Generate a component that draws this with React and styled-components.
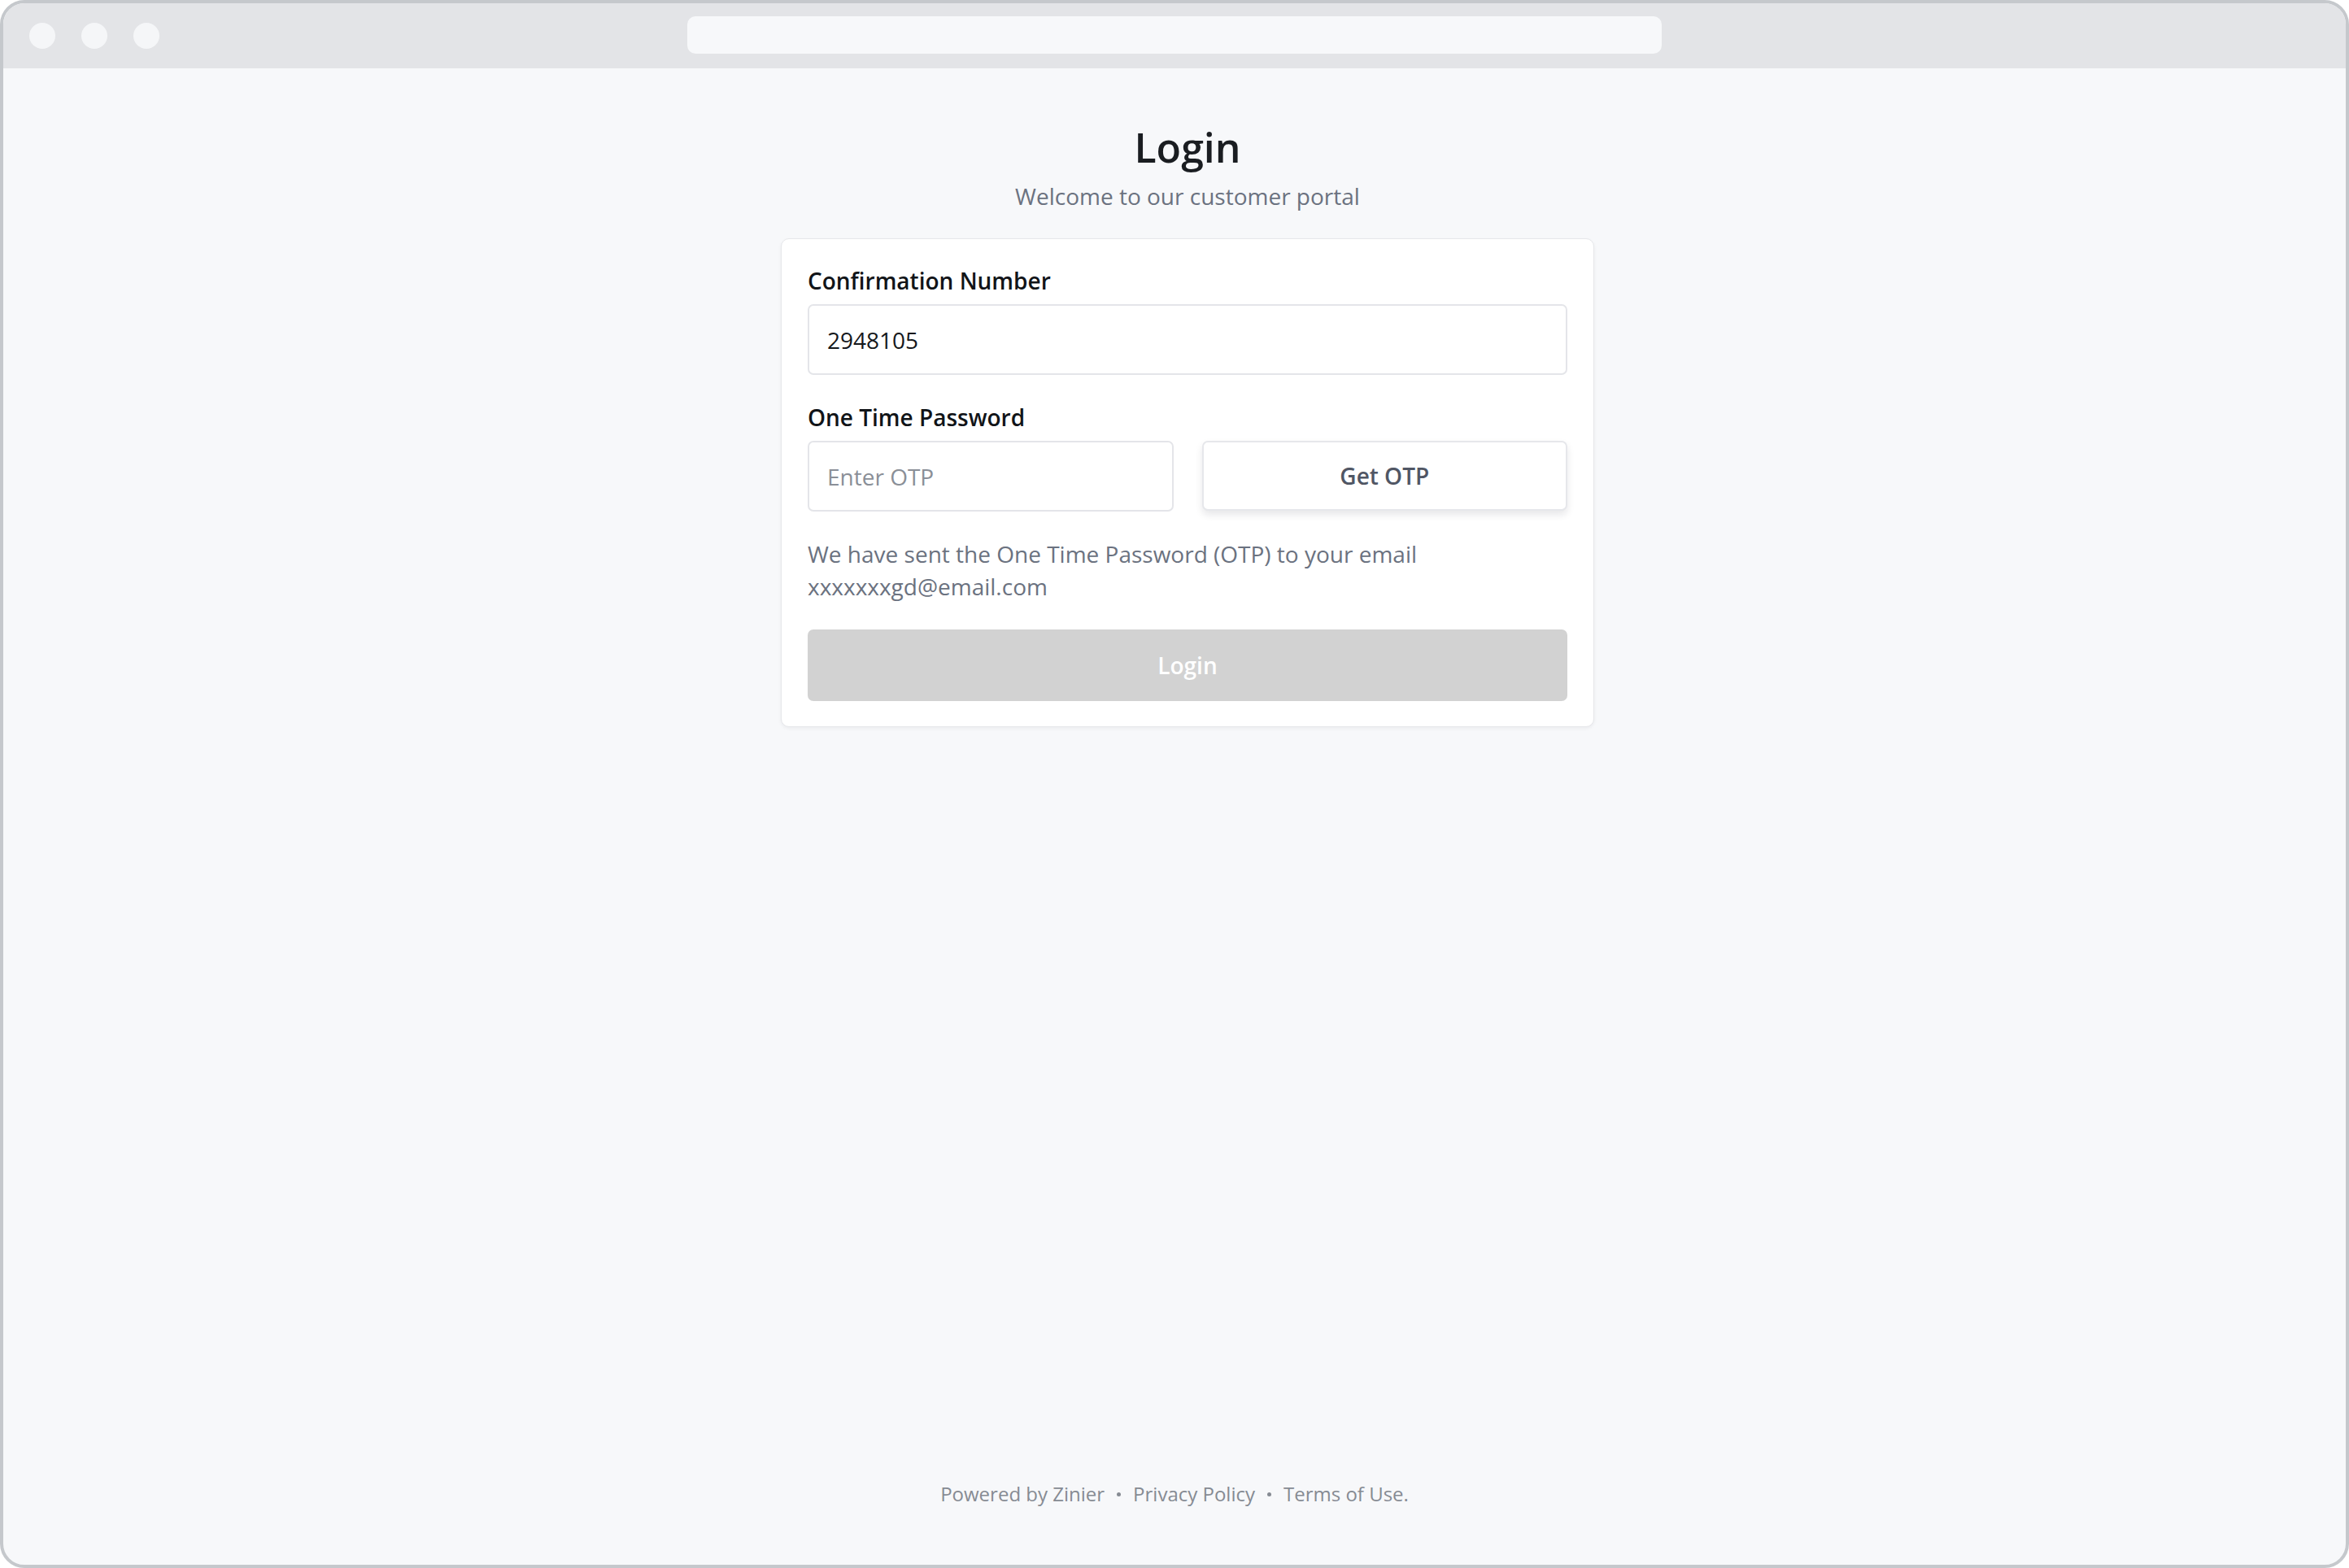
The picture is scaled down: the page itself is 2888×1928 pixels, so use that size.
import React, { useState } from "react";
import styled, { createGlobalStyle } from "styled-components";

const GlobalStyle = createGlobalStyle`
  html, body {
    margin: 0;
    padding: 0;
    background: #ffffff;
  }
  * {
    box-sizing: border-box;
  }
`;

const FONT = `"Open Sans", "Noto Sans", "Liberation Sans", sans-serif`;

const Frame = styled.div`
  width: 2888px;
  height: 1928px;
  display: flex;
  flex-direction: column;
  border: 4px solid #c5c8cc;
  border-radius: 30px;
  overflow: hidden;
  background: #f7f8fa;
  font-family: ${FONT};
`;

const TopBar = styled.div`
  height: 80px;
  flex: none;
  display: grid;
  grid-template-columns: 1fr 1198px 1fr;
  align-items: center;
  background: #e3e4e7;
  padding: 0 32px;
`;

const Dots = styled.div`
  display: flex;
  gap: 32px;
`;

const Dot = styled.span`
  width: 32px;
  height: 32px;
  border-radius: 50%;
  background: #f5f6f8;
`;

const AddressBar = styled.div`
  height: 46px;
  margin-top: -2px;
  border-radius: 10px;
  background: #f7f8fa;
`;

const Page = styled.div`
  flex: 1;
  display: flex;
  flex-direction: column;
  align-items: center;
`;

const Main = styled.div`
  display: flex;
  flex-direction: column;
  align-items: center;
  padding: 65px 0 0 32px;
`;

const Title = styled.h1`
  margin: 0;
  font-size: 50px;
  line-height: 64px;
  font-weight: 600;
  color: #1a1d21;
`;

const Subtitle = styled.p`
  margin: 8px 0 0;
  font-size: 28px;
  line-height: 40px;
  color: #6b7280;
`;

const Card = styled.div`
  width: 1000px;
  margin-top: 32px;
  padding: 31px 32px;
  background: #ffffff;
  border: 1px solid #e6e7ea;
  border-radius: 10px;
  box-shadow: 0 2px 4px rgba(17, 24, 39, 0.05);
  display: flex;
  flex-direction: column;
`;

const Field = styled.div`
  display: flex;
  flex-direction: column;
  margin-top: ${({ $first }) => ($first ? "0" : "32px")};
`;

const Label = styled.label`
  font-size: 28px;
  line-height: 40px;
  font-weight: 600;
  color: #111418;
  margin-bottom: 9px;
`;

const Input = styled.input`
  width: 100%;
  height: 87px;
  padding: 0 22px;
  border: 2px solid #e4e5e9;
  border-radius: 7px;
  background: #ffffff;
  font-family: ${FONT};
  font-size: 28px;
  color: #15181c;
  outline: none;
  &::placeholder {
    color: #8a8f97;
  }
`;

const OtpRow = styled.div`
  display: grid;
  grid-template-columns: 1fr 1fr;
  gap: 35px;
`;

const GhostButton = styled.button`
  height: 86px;
  border: 2px solid #e6e7eb;
  border-radius: 7px;
  background: #ffffff;
  box-shadow: 0 5px 10px rgba(17, 24, 39, 0.1);
  font-family: ${FONT};
  font-size: 28px;
  font-weight: 600;
  color: #505664;
  cursor: pointer;
`;

const Help = styled.p`
  margin: 32px 0 0;
  font-size: 28px;
  line-height: 40px;
  color: #6b7280;
  padding-right: 140px;
`;

const PrimaryButton = styled.button`
  margin-top: 33px;
  height: 88px;
  border: none;
  border-radius: 7px;
  background: #d2d2d2;
  font-family: ${FONT};
  font-size: 28px;
  font-weight: 600;
  color: #ffffff;
`;

const Footer = styled.footer`
  margin-top: auto;
  margin-bottom: 69px;
  display: flex;
  align-items: center;
  font-size: 24px;
  line-height: 36px;
  color: #868b93;
`;

const Sep = styled.span`
  width: 5px;
  height: 5px;
  border-radius: 50%;
  background: #868b93;
  margin: 0 15px;
`;

export default function App() {
  const [confirmation, setConfirmation] = useState("2948105");
  const [otp, setOtp] = useState("");

  return (
    <>
      <GlobalStyle />
      <Frame>
        <TopBar>
          <Dots>
            <Dot />
            <Dot />
            <Dot />
          </Dots>
          <AddressBar />
          <div />
        </TopBar>
        <Page>
          <Main>
            <Title>Login</Title>
            <Subtitle>Welcome to our customer portal</Subtitle>
            <Card>
              <Field $first>
                <Label>Confirmation Number</Label>
                <Input
                  value={confirmation}
                  onChange={(e) => setConfirmation(e.target.value)}
                />
              </Field>
              <Field>
                <Label>One Time Password</Label>
                <OtpRow>
                  <Input
                    placeholder="Enter OTP"
                    value={otp}
                    onChange={(e) => setOtp(e.target.value)}
                  />
                  <GhostButton>Get OTP</GhostButton>
                </OtpRow>
              </Field>
              <Help>
                We have sent the One Time Password (OTP) to your email
                xxxxxxxgd@email.com
              </Help>
              <PrimaryButton disabled>Login</PrimaryButton>
            </Card>
          </Main>
          <Footer>
            <span>Powered by Zinier</span>
            <Sep />
            <span>Privacy Policy</span>
            <Sep />
            <span>Terms of Use.</span>
          </Footer>
        </Page>
      </Frame>
    </>
  );
}
